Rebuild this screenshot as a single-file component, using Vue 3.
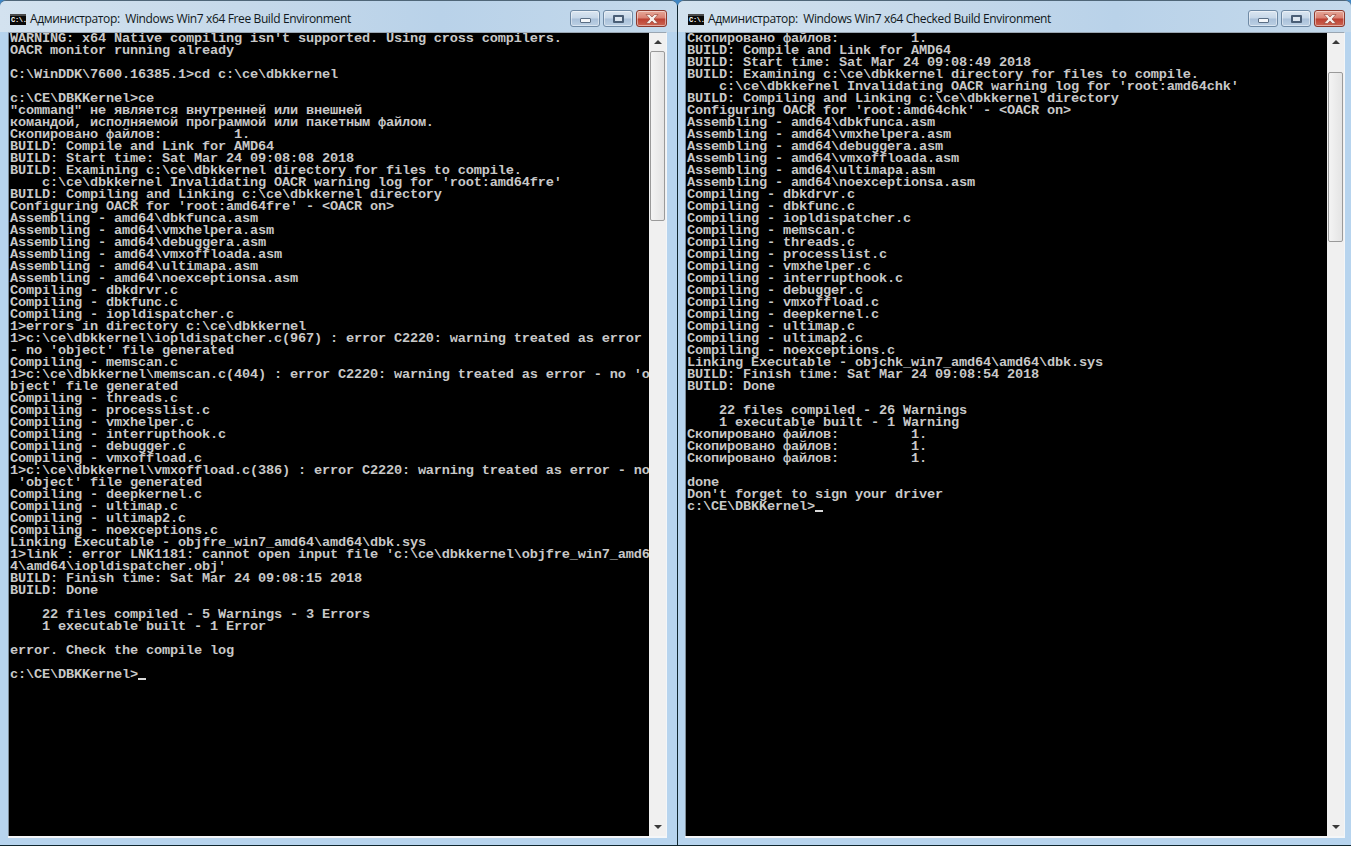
<script setup>
const leftLines = `WARNING: x64 Native compiling isn't supported. Using cross compilers.
OACR monitor running already

C:\\WinDDK\\7600.16385.1>cd c:\\ce\\dbkkernel

c:\\CE\\DBKKernel>ce
"command" не является внутренней или внешней
командой, исполняемой программой или пакетным файлом.
Скопировано файлов:         1.
BUILD: Compile and Link for AMD64
BUILD: Start time: Sat Mar 24 09:08:08 2018
BUILD: Examining c:\\ce\\dbkkernel directory for files to compile.
    c:\\ce\\dbkkernel Invalidating OACR warning log for 'root:amd64fre'
BUILD: Compiling and Linking c:\\ce\\dbkkernel directory
Configuring OACR for 'root:amd64fre' - <OACR on>
Assembling - amd64\\dbkfunca.asm
Assembling - amd64\\vmxhelpera.asm
Assembling - amd64\\debuggera.asm
Assembling - amd64\\vmxoffloada.asm
Assembling - amd64\\ultimapa.asm
Assembling - amd64\\noexceptionsa.asm
Compiling - dbkdrvr.c
Compiling - dbkfunc.c
Compiling - iopldispatcher.c
1>errors in directory c:\\ce\\dbkkernel
1>c:\\ce\\dbkkernel\\iopldispatcher.c(967) : error C2220: warning treated as error
- no 'object' file generated
Compiling - memscan.c
1>c:\\ce\\dbkkernel\\memscan.c(404) : error C2220: warning treated as error - no 'o
bject' file generated
Compiling - threads.c
Compiling - processlist.c
Compiling - vmxhelper.c
Compiling - interrupthook.c
Compiling - debugger.c
Compiling - vmxoffload.c
1>c:\\ce\\dbkkernel\\vmxoffload.c(386) : error C2220: warning treated as error - no
 'object' file generated
Compiling - deepkernel.c
Compiling - ultimap.c
Compiling - ultimap2.c
Compiling - noexceptions.c
Linking Executable - objfre_win7_amd64\\amd64\\dbk.sys
1>link : error LNK1181: cannot open input file 'c:\\ce\\dbkkernel\\objfre_win7_amd6
4\\amd64\\iopldispatcher.obj'
BUILD: Finish time: Sat Mar 24 09:08:15 2018
BUILD: Done

    22 files compiled - 5 Warnings - 3 Errors
    1 executable built - 1 Error

error. Check the compile log

c:\\CE\\DBKKernel>`

const rightLines = `Скопировано файлов:         1.
BUILD: Compile and Link for AMD64
BUILD: Start time: Sat Mar 24 09:08:49 2018
BUILD: Examining c:\\ce\\dbkkernel directory for files to compile.
    c:\\ce\\dbkkernel Invalidating OACR warning log for 'root:amd64chk'
BUILD: Compiling and Linking c:\\ce\\dbkkernel directory
Configuring OACR for 'root:amd64chk' - <OACR on>
Assembling - amd64\\dbkfunca.asm
Assembling - amd64\\vmxhelpera.asm
Assembling - amd64\\debuggera.asm
Assembling - amd64\\vmxoffloada.asm
Assembling - amd64\\ultimapa.asm
Assembling - amd64\\noexceptionsa.asm
Compiling - dbkdrvr.c
Compiling - dbkfunc.c
Compiling - iopldispatcher.c
Compiling - memscan.c
Compiling - threads.c
Compiling - processlist.c
Compiling - vmxhelper.c
Compiling - interrupthook.c
Compiling - debugger.c
Compiling - vmxoffload.c
Compiling - deepkernel.c
Compiling - ultimap.c
Compiling - ultimap2.c
Compiling - noexceptions.c
Linking Executable - objchk_win7_amd64\\amd64\\dbk.sys
BUILD: Finish time: Sat Mar 24 09:08:54 2018
BUILD: Done

    22 files compiled - 26 Warnings
    1 executable built - 1 Warning
Скопировано файлов:         1.
Скопировано файлов:         1.
Скопировано файлов:         1.

done
Don't forget to sign your driver
c:\\CE\\DBKKernel>`

const windows = [
  { id: 'left', title: 'Администратор:  Windows Win7 x64 Free Build Environment', text: leftLines },
  { id: 'right', title: 'Администратор:  Windows Win7 x64 Checked Build Environment', text: rightLines }
]
</script>

<template>
  <div class="desktop">
    <section v-for="w in windows" :key="w.id" class="window" :class="w.id">
      <header class="titlebar">
        <span class="app-icon"><span class="app-icon-text">C:\.</span></span>
        <span class="title">{{ w.title }}</span>
        <div class="controls">
          <button class="ctl"><span class="min-glyph"></span></button>
          <button class="ctl"><span class="max-glyph"></span></button>
          <button class="ctl close">
            <svg width="18" height="12" viewBox="0 0 18 12">
              <path d="M3 1.5h3.6L9 4l2.4-2.5H15L11 6l4 4.5h-3.6L9 8l-2.4 2.5H3L7 6z" fill="#f6eeea" stroke="#8a3a2e" stroke-width="0.6" />
            </svg>
          </button>
        </div>
      </header>
      <div class="client">
        <pre class="console">{{ w.text }}<span class="cursor"></span></pre>
        <aside class="scrollbar">
          <span class="arrow up"></span>
          <div class="track"><div class="thumb"></div></div>
          <span class="arrow down"></span>
        </aside>
      </div>
    </section>
  </div>
</template>

<style>
html, body { margin: 0; background: #0f2a33; overflow: hidden; }
</style>

<style scoped>
.desktop {
  width: 1351px;
  height: 846px;
  display: flex;
  gap: 1px;
  background: linear-gradient(#3f86c4 0, #3f86c4 4px, #10262e 6px);
  box-sizing: border-box;
  padding-bottom: 1px;
}
.window {
  box-sizing: border-box;
  height: 845px;
  display: flex;
  flex-direction: column;
  background: #b7d4ee;
  border-top: 1px solid #4f6678;
  border-radius: 6px 6px 0 0;
}
.window.left { width: 677px; padding: 0 10px 7px 8px; }
.window.right { width: 673px; padding: 0 6px 7px 7px; }
.titlebar {
  height: 31px;
  margin: 0 -10px 0 -8px;
  padding: 0 10px 0 10px;
  display: flex;
  align-items: center;
  flex: none;
  border-radius: 6px 6px 0 0;
  background: linear-gradient(90deg, #d3e2ef 0, #c6d9ea 35%, #b9d2e9 65%, #c4d9eb 100%);
}
.right .titlebar { margin: 0 -6px 0 -7px; padding: 0 6px 0 10px; }
.app-icon {
  width: 16px;
  height: 11px;
  margin-top: 5px;
  background: #0a0a0a;
  border-top: 2px solid #4a4a4a;
  box-sizing: border-box;
  display: flex;
  align-items: center;
  overflow: hidden;
  flex: none;
}
.app-icon-text {
  font: bold 7px/8px "Liberation Mono", monospace;
  color: #fff;
  letter-spacing: -0.3px;
  padding-left: 1px;
}
.title {
  margin: 5px 0 0 4px;
  font: 12px/16px "Open Sans", "Noto Sans", sans-serif;
  color: #101820;
  white-space: pre;
  letter-spacing: -0.37px;
}
.controls {
  margin-left: auto;
  display: flex;
  gap: 3px;
  align-self: flex-start;
  padding-top: 9px;
}
.ctl {
  width: 30px;
  height: 17px;
  padding: 0;
  box-sizing: border-box;
  border: 1px solid #6f8aa5;
  border-radius: 3px;
  background: linear-gradient(#dbe6f1 0, #c6d7e8 48%, #a9c0d9 52%, #bcd0e4 100%);
  box-shadow: inset 0 0 0 1px rgba(255,255,255,.45);
  display: flex;
  align-items: center;
  justify-content: center;
}
.ctl.close {
  width: 31px;
  border-color: #8c3a2e;
  background: linear-gradient(#e6a898 0, #d97f70 48%, #bc3f30 52%, #cc6552 100%);
}
.min-glyph {
  width: 11px;
  height: 5px;
  margin-top: 4px;
  background: #f4f7fa;
  border: 1px solid #5a6e84;
  border-radius: 1px;
  box-sizing: border-box;
}
.max-glyph {
  width: 11px;
  height: 8px;
  border: 2px solid #4a5e76;
  background: #dce6f0;
  box-sizing: border-box;
  border-radius: 1px;
}
.client {
  flex: 1;
  min-height: 0;
  display: flex;
  background: #000;
  border: 1px solid #f4f6f8;
  border-left: 0;
  border-top-color: #9aa6b2;
  border-bottom-width: 2px;
}
.console {
  flex: 1;
  min-width: 0;
  margin: 0;
  padding: 0 0 0 1px;
  background: #000;
  color: #c8c8c8;
  border-left: 1px solid #7c8a96;
  font: bold 13.6px/12px "Liberation Mono", "DejaVu Sans Mono", monospace;
  letter-spacing: -0.16px;
  white-space: pre;
}
.cursor {
  display: inline-block;
  width: 8px;
  height: 2px;
  background: #d8d8d8;
  vertical-align: -2px;
}
.scrollbar {
  width: 17px;
  flex: none;
  background: #f0f0f0;
  display: flex;
  flex-direction: column;
  align-items: center;
}
.arrow {
  width: 0;
  height: 0;
  border-left: 4px solid transparent;
  border-right: 4px solid transparent;
  flex: none;
}
.arrow.up { border-bottom: 4px solid #3a3a3a; margin: 7px 0 6px; }
.arrow.down { border-top: 4px solid #3a3a3a; margin: 6px 0 7px; }
.track { flex: 1; width: 100%; }
.thumb {
  height: 170px;
  margin: 1px 1px 0;
  box-sizing: border-box;
  border: 1px solid #9a9a9a;
  border-radius: 2px;
  background: linear-gradient(90deg, #f4f4f4, #e4e4e4);
}
.right .thumb { margin-top: 22px; }
</style>
